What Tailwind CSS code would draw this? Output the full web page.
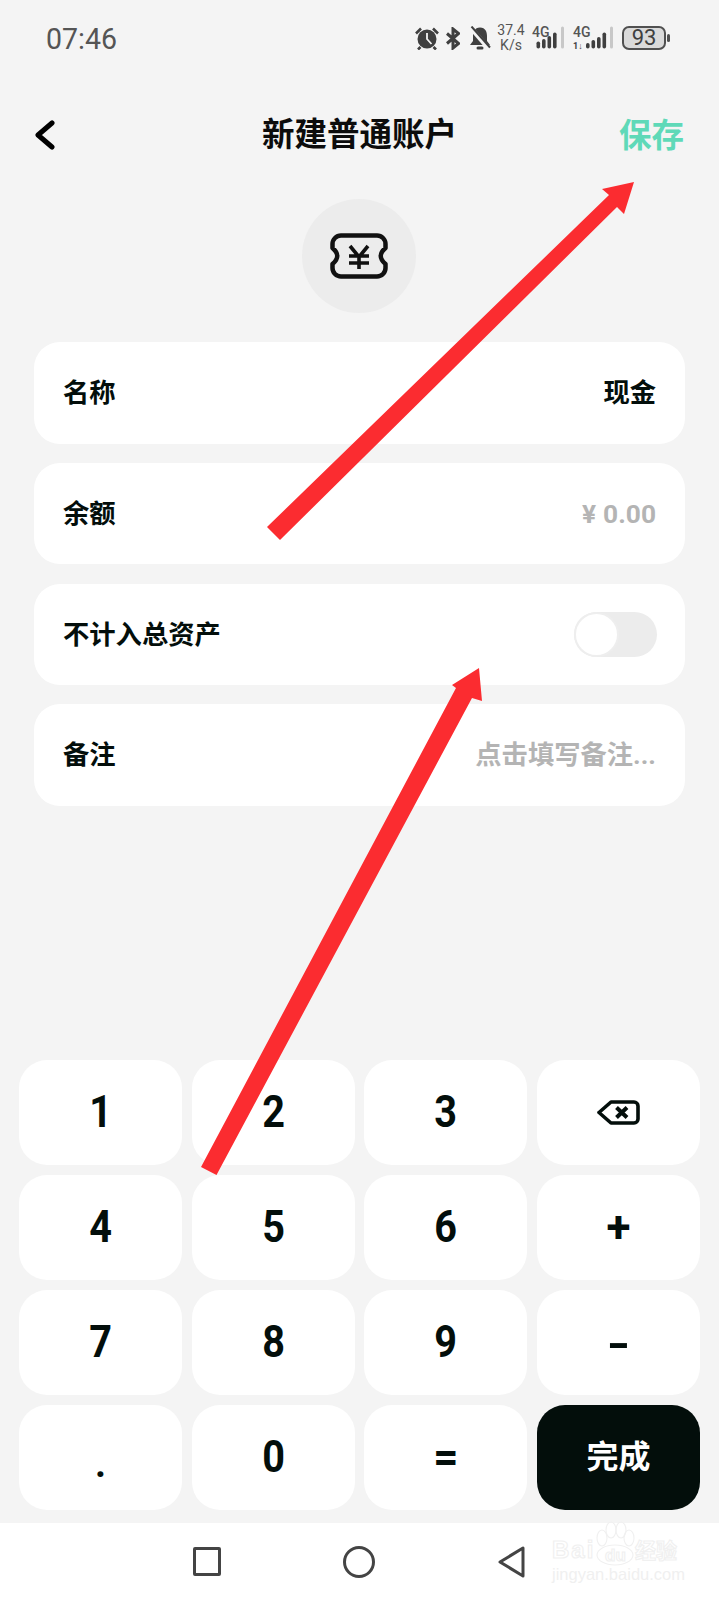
<!DOCTYPE html>
<html lang="zh-CN">
  <head>
    <meta charset="UTF-8">
    <meta name="viewport" content="width=device-width, initial-scale=1">
    <title>新建普通账户</title>
    <script src="https://cdn.jsdelivr.net/npm/@tailwindcss/browser@4"></script>
  </head>

  <body class="relative w-[719px] h-[1600px] overflow-hidden bg-[#f4f4f4] text-[#030e0b] font-['Roboto','Noto_Sans_CJK_SC',sans-serif] flex flex-col">

    <!-- status bar -->
    <div class="h-[76px] shrink-0 flex items-center pl-[46px] text-[#555555]">
      <span class="text-[30px] leading-none scale-x-[0.95] origin-left pt-[1px]">07:46</span>
      <div class="ml-auto mr-[49px] flex items-center">
        <svg width="24" height="23" viewBox="0 0 24 23" fill="#3f3f3f">
          <circle cx="12" cy="12" r="9.500"/>
          <path d="M1 6.500 L6 1.500 M23 6.500 L18 1.500 M5.500 20 L3 22.500 M18.500 20 L21 22.500" stroke="#3f3f3f" stroke-width="2.600" fill="none"/>
          <path d="M12 6 V12 L16.500 17" stroke="#f4f4f4" stroke-width="1.800" fill="none"/>
        </svg>
        <svg class="ml-[7px]" width="14" height="23" viewBox="0 0 14 23" fill="none" stroke="#3f3f3f" stroke-width="3">
          <path d="M1 6.500 L12.500 16.500 L7 21 V2 L12.500 6.500 L1 16.500"/>
        </svg>
        <svg class="ml-[9px]" width="22" height="24" viewBox="0 0 22 24" fill="#3f3f3f">
          <path d="M11 1.500 C5.500 1.500 4 6 4 10 V15 L1 19 H21 L18 15 V10 C18 6 16.500 1.500 11 1.500Z"/>
          <rect x="7.500" y="20.500" width="7" height="3" rx="1.500"/>
          <path d="M1.500 1.500 L20 23" stroke="#f4f4f4" stroke-width="4.500"/>
          <path d="M2.500 0.500 L21 21.500" stroke="#3f3f3f" stroke-width="2"/>
        </svg>
        <div class="ml-[6px] w-[28px] flex flex-col items-center text-[14px] leading-[15px] text-[#555555]">
          <span>37.4</span>
          <span>K/s</span>
        </div>
        <svg class="ml-[6px]" width="34" height="26" viewBox="0 0 34 26">
          <text x="1" y="12" font-family="Roboto" font-size="14" font-weight="500" fill="#555555">4G</text>
          <g fill="#3f3f3f">
            <rect x="5.500" y="16.500" width="3.600" height="7" rx="1.800"/>
            <rect x="11" y="14" width="3.600" height="9.500" rx="1.800"/>
            <rect x="16.500" y="11" width="3.600" height="12.500" rx="1.800"/>
            <rect x="22" y="7.500" width="3.600" height="16" rx="1.800"/>
          </g>
          <rect x="30" y="1.500" width="3" height="22" rx="1.500" fill="#c8c8c8"/>
        </svg>
        <svg class="ml-[7px]" width="42" height="26" viewBox="0 0 42 26">
          <text x="1" y="12" font-family="Roboto" font-size="14" font-weight="500" fill="#555555">4G</text>
          <text x="1" y="23.500" font-family="Roboto" font-size="9" font-weight="700" fill="#3f3f3f">1↓</text>
          <g fill="#3f3f3f">
            <rect x="14" y="18" width="3.600" height="5.500" rx="1.800"/>
            <rect x="19.500" y="15" width="3.600" height="8.500" rx="1.800"/>
            <rect x="25" y="12" width="3.600" height="11.500" rx="1.800"/>
            <rect x="30.500" y="7.500" width="3.600" height="16" rx="1.800"/>
          </g>
          <rect x="38" y="1.500" width="3" height="22" rx="1.500" fill="#c8c8c8"/>
        </svg>
        <div class="ml-[8px] w-[44px] h-[24px] rounded-[7px] border-2 border-[#505050] bg-[#dadada] flex items-center justify-center text-[22px] leading-none text-[#3f3f3f]">93</div>
        <div class="ml-[1px] w-[3px] h-[8px] rounded-full bg-[#505050]"></div>
      </div>
    </div>

    <!-- title bar -->
    <header class="h-[118px] shrink-0 px-[35px] grid grid-cols-[1fr_auto_1fr] items-center">
      <svg width="24" height="32" viewBox="0 0 24 32" fill="none" stroke="#000000" stroke-width="5" stroke-linecap="round" stroke-linejoin="round">
        <path d="M17 4 L3 16 L17 28"/>
      </svg>
      <h1 class="text-[32.500px] leading-none font-bold text-[#0c0c0c] pt-[1px]">新建普通账户</h1>
      <span class="justify-self-end text-[32.500px] leading-none font-bold text-[#5fd9b8] pt-[3px]">保存</span>
    </header>

    <!-- account icon -->
    <div class="mt-[5px] ml-[302px] w-[114px] h-[114px] shrink-0 rounded-full bg-[#ececec] flex items-center justify-center">
      <svg width="58" height="46" viewBox="0 0 58 46" fill="none" stroke="#111111" stroke-width="4.500" stroke-linecap="round" stroke-linejoin="round">
        <path d="M11 2.500 H47 A8.500 8.500 0 0 1 55.500 11 V15 Q46 23 55.500 31 V35 A8.500 8.500 0 0 1 47 43.500 H11 A8.500 8.500 0 0 1 2.500 35 V31 Q12 23 2.500 15 V11 A8.500 8.500 0 0 1 11 2.500 Z"/>
        <path d="M20 13 L29 24 L38 13 M19 23 H39 M19 30 H39 M29 24 V36" stroke-width="3.600" stroke-linecap="butt"/>
      </svg>
    </div>

    <!-- form rows -->
    <div class="mt-[29px] mx-[34px] flex flex-col text-[26.300px] font-bold">
      <div class="h-[102px] rounded-[26px] bg-white px-[29px] pt-[2px] flex items-center justify-between">
        <span>名称</span>
        <span>现金</span>
      </div>
      <div class="mt-[19px] h-[101px] rounded-[26px] bg-white px-[29px] pt-[2px] flex items-center justify-between">
        <span>余额</span>
        <span class="text-[#b4b4b4] flex gap-[7px]"><span>¥</span><span>0.00</span></span>
      </div>
      <div class="mt-[20px] h-[101px] rounded-[26px] bg-white pl-[29px] pr-[28px] flex items-center justify-between">
        <span class="pt-[2px]">不计入总资产</span>
        <div class="w-[83px] h-[45px] rounded-full bg-[#ececec]">
          <div class="w-[45px] h-[45px] rounded-full bg-white border-2 border-[#eeeeee]"></div>
        </div>
      </div>
      <div class="mt-[19px] h-[102px] rounded-[26px] bg-white px-[29px] pt-[2px] flex items-center justify-between">
        <span>备注</span>
        <span class="text-[#b4b4b4]">点击填写备注...</span>
      </div>
    </div>

    <!-- keypad -->
    <div class="mt-auto px-[19px] pb-[13px] grid grid-cols-4 auto-rows-[105.500px] gap-x-[9.500px] gap-y-[9.500px] text-[44px] font-bold">
      <button class="rounded-[28px] bg-white"><span class="inline-block scale-x-90">1</span></button>
      <button class="rounded-[28px] bg-white"><span class="inline-block scale-x-90">2</span></button>
      <button class="rounded-[28px] bg-white"><span class="inline-block scale-x-90">3</span></button>
      <button class="rounded-[28px] bg-white flex items-center justify-center">
        <svg width="43" height="25" viewBox="0 0 43 25" fill="none" stroke="#030e0b" stroke-width="3.600" stroke-linejoin="round">
          <path d="M14 2 H37 A4 4 0 0 1 41 6 V19 A4 4 0 0 1 37 23 H14 L2 12.500 Z"/>
          <path d="M19.500 7.500 L30 17.500 M30 7.500 L19.500 17.500" stroke-width="4"/>
        </svg>
      </button>
      <button class="rounded-[28px] bg-white"><span class="inline-block scale-x-90">4</span></button>
      <button class="rounded-[28px] bg-white"><span class="inline-block scale-x-90">5</span></button>
      <button class="rounded-[28px] bg-white"><span class="inline-block scale-x-90">6</span></button>
      <button class="rounded-[28px] bg-white">+</button>
      <button class="rounded-[28px] bg-white"><span class="inline-block scale-x-90">7</span></button>
      <button class="rounded-[28px] bg-white"><span class="inline-block scale-x-90">8</span></button>
      <button class="rounded-[28px] bg-white"><span class="inline-block scale-x-90">9</span></button>
      <button class="rounded-[28px] bg-white pt-[4px]"><span class="inline-block scale-x-[1.4]">-</span></button>
      <button class="rounded-[28px] bg-white pt-[14px] text-[38px]">.</button>
      <button class="rounded-[28px] bg-white"><span class="inline-block scale-x-90">0</span></button>
      <button class="rounded-[28px] bg-white">=</button>
      <button class="rounded-[28px] bg-[#030e0b] text-white text-[32px]">完成</button>
    </div>

    <!-- system nav -->
    <nav class="h-[77px] shrink-0 bg-white pl-[193px] flex items-center gap-[123px]">
      <div class="w-[28px] h-[29px] rounded-[2px] border-[3px] border-[#444444]"></div>
      <div class="w-[32px] h-[32px] rounded-full border-[3px] border-[#444444] -ml-[1px]"></div>
      <svg class="-ml-[1px]" width="28" height="32" viewBox="0 0 28 32" fill="none" stroke="#444444" stroke-width="3" stroke-linejoin="round">
        <path d="M26 2 V30 L3 16 Z"/>
      </svg>
    </nav>

    <!-- baidu watermark -->
    <svg class="absolute left-[550px] top-[1520px]" width="140" height="70" viewBox="0 0 140 70" fill="none" stroke="#f0f0f0" stroke-width="1.100">
      <ellipse cx="65" cy="35" rx="18" ry="10"/>
      <ellipse cx="52" cy="18" rx="5" ry="8"/>
      <ellipse cx="61" cy="10" rx="5" ry="8"/>
      <ellipse cx="71" cy="10" rx="5" ry="8"/>
      <ellipse cx="79" cy="18" rx="5" ry="8"/>
      <text x="2" y="38" font-family="Liberation Sans" font-size="24" font-weight="700" letter-spacing="2">Bai</text>
      <text x="55" y="41" font-family="Liberation Sans" font-size="17" font-weight="700">du</text>
      <text x="85" y="38" font-family="Noto Sans CJK SC" font-size="21" font-weight="700">经验</text>
      <text x="2" y="60" font-family="Liberation Sans" font-size="16.500" fill="#f0f0f0" stroke="none">jingyan.baidu.com</text>
    </svg>

    <!-- red annotation arrows -->
    <svg class="absolute inset-0 pointer-events-none" width="719" height="1600" viewBox="0 0 719 1600" fill="#fb2c30">
      <polygon points="267,527 280,540 617,207 624,214 634,182 602,189 609,195"/>
      <polygon points="201,1167 216.500,1175 472,698 482,701 479,668 452,685 456,688"/>
    </svg>

  </body>
</html>
